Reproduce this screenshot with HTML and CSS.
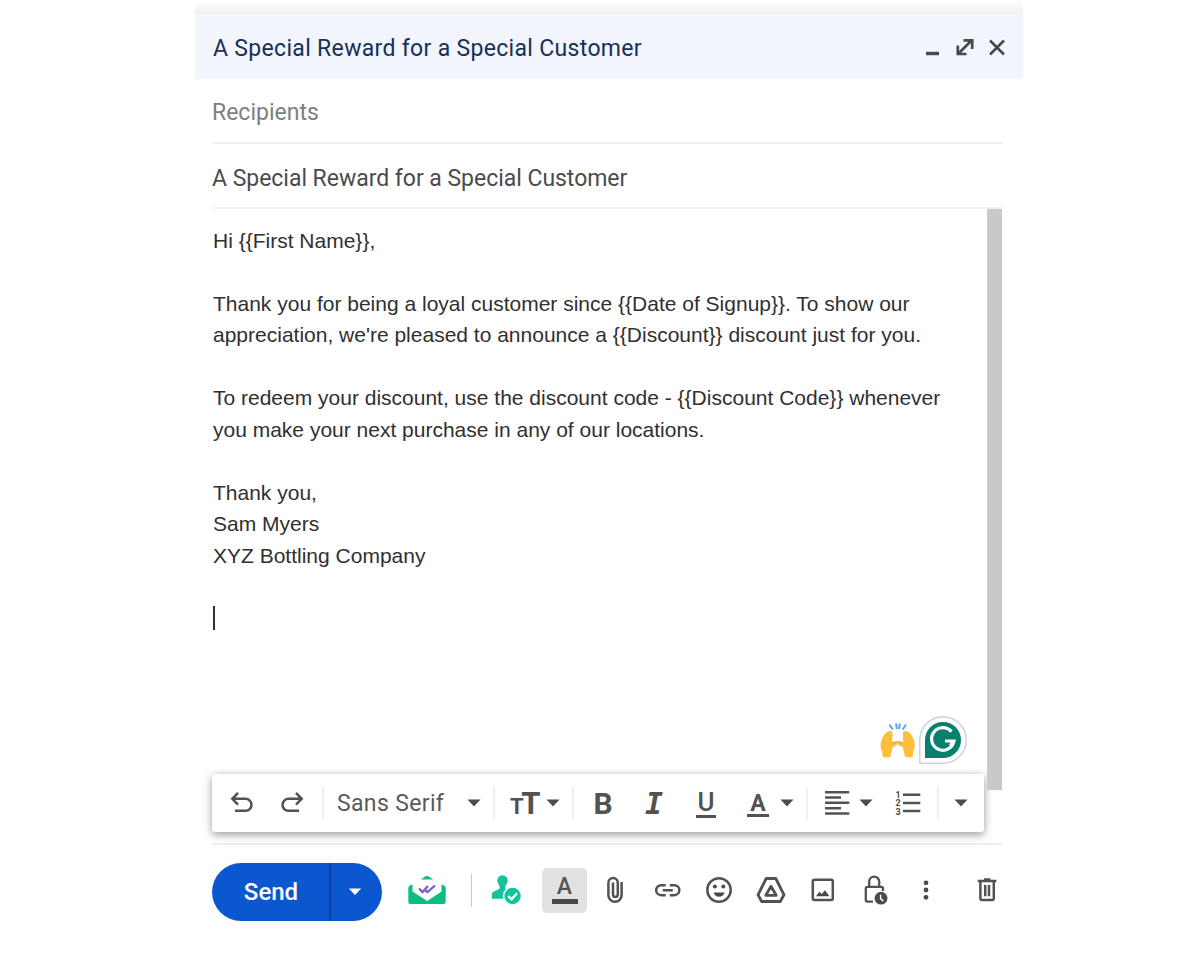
FILE: index.html
```
<!DOCTYPE html>
<html lang="en">
<head>
    <meta charset="UTF-8">
    <meta name="viewport" content="width=device-width, initial-scale=1.0">
    <title>A Special Reward for a Special Customer</title>
    <link rel="stylesheet" href="styles.css">
</head>
<body>

<div class="compose">
    <div class="top-shade"></div>
    <div class="header">
        <h1>A Special Reward for a Special Customer</h1>
        <div class="window-buttons">
            <svg width="20" height="20" viewBox="0 0 20 20"><path d="M4 16.5H17" stroke-width="3.4"/></svg>
            <svg width="20" height="20" viewBox="0 0 20 20"><path d="M4 16L16 4M8.5 3.4H17.2V12M2.8 8.5V17H11.5" stroke-width="2.7"/></svg>
            <svg width="20" height="20" viewBox="0 0 20 20"><path d="M3 3.5L17 17.5M17 3.5L3 17.5" stroke-width="2.6"/></svg>
        </div>
    </div>

    <div class="field recipients">Recipients</div>
    <div class="field subject">A Special Reward for a Special Customer</div>

    <div class="editor">
        <div class="editor-main">
            <div class="message">
                <p>Hi {{First Name}},</p>
                <p>Thank you for being a loyal customer since {{Date of Signup}}. To show our<br>appreciation, we're pleased to announce a {{Discount}} discount just for you.</p>
                <p>To redeem your discount, use the discount code - {{Discount Code}} whenever<br>you make your next purchase in any of our locations.</p>
                <p>Thank you,<br>Sam Myers<br>XYZ Bottling Company</p>
                <div class="cursor"></div>
            </div>

            <div class="badges">
                <svg width="36" height="38" viewBox="0 0 36 38">
                    <path d="M9.5 3.5L12.8 8.5M16 2.5L16.8 8M26 3.5L22.7 8.5M19.8 2.5L19 8" stroke="#4aa8ee" stroke-width="1.9" fill="none"/>
                    <path d="M2.5 35.5L2.2 30.5Q.2 27 .6 23Q1 18 4 14Q7 10 10.5 10Q12.8 10.3 12.5 13L12.2 21.5H17.5Q18.2 23.5 16 24.5L12.5 26.5L10.5 35.5Q6.5 37.5 2.5 35.5Z" fill="#fdbf3c"/>
                    <path d="M32.9 35.5L33.2 30.5Q35.2 27 34.8 23Q34.4 18 31.4 14Q28.4 10 24.9 10Q22.6 10.3 22.9 13L23.2 21.5H17.9Q17.2 23.5 19.4 24.5L22.9 26.5L24.9 35.5Q28.9 37.5 32.9 35.5Z" fill="#fdbf3c"/>
                    <path d="M12.5 22Q17.7 19.6 22.9 22" stroke="#e8982f" stroke-width="1.3" fill="none"/>
                </svg>
                <svg width="48" height="48" viewBox="0 0 48 48">
                    <path d="M.8 47.2V24A23.2 23.2 0 1 1 24 47.2Z" fill="#fff" stroke="#cfd0de" stroke-width="1.4"/>
                    <path d="M6 42V24A18 18 0 1 1 24 42Z" fill="#04806c"/>
                    <path d="M32.5 15.6A11.3 11.3 0 1 0 35 25H26M31 29.5L35.3 25" fill="none" stroke="#fff" stroke-width="3.2"/>
                </svg>
            </div>

            <div class="format-bar">
                <svg class="icon" viewBox="0 0 32 32"><path d="M12 5.8L6.3 11.8L12 17.6M6.5 11.8H19.5A5.9 5.9 0 0 1 19.5 23.8H9"/></svg>
                <svg class="icon" viewBox="0 0 32 32"><path d="M20 5.8L25.7 11.8L20 17.6M25.5 11.8H12.5A5.9 5.9 0 0 0 12.5 23.8H23"/></svg>
                <span class="line"></span>
                <span class="font-name">Sans Serif</span>
                <svg class="caret" viewBox="0 0 14 8"><path d="M.5 .5H13.5L7 7.5Z"/></svg>
                <span class="line"></span>
                <span class="glyph size"><small>T</small>T</span>
                <svg class="caret" viewBox="0 0 14 8"><path d="M.5 .5H13.5L7 7.5Z"/></svg>
                <span class="line"></span>
                <span class="glyph bold">B</span>
                <span class="glyph italic">I</span>
                <span class="glyph underline">U</span>
                <span class="glyph color">A</span>
                <svg class="caret" viewBox="0 0 14 8"><path d="M.5 .5H13.5L7 7.5Z"/></svg>
                <span class="line"></span>
                <svg class="icon" viewBox="0 0 32 32"><path d="M4 5.2H28.3M4 10.5H20M4 15.8H28.3M4 21.2H20M4 26.6H28.3"/></svg>
                <svg class="caret" viewBox="0 0 14 8"><path d="M.5 .5H13.5L7 7.5Z"/></svg>
                <svg class="icon" viewBox="0 0 32 32">
                    <path d="M11 7.7H28.3M11 15.9H28.3M11 24H28.3"/>
                    <text x="3.5" y="10.5">1</text><text x="3.5" y="19">2</text><text x="3.5" y="27.5">3</text>
                </svg>
                <span class="line"></span>
                <svg class="caret" viewBox="0 0 14 8"><path d="M.5 .5H13.5L7 7.5Z"/></svg>
            </div>
        </div>
        <div class="scrollbar"></div>
    </div>

    <div class="actions">
        <div class="send">
            <span class="send-label">Send</span>
            <span class="send-more"><svg width="14" height="8" viewBox="0 0 14 8"><path d="M.8 .5H13.2L7 7Z" fill="#fff"/></svg></span>
        </div>
        <svg class="mail" viewBox="0 0 40 32">
            <path d="M12 7L18 2.6Q20 1.4 22 2.6L28 7Z" fill="#12b886"/>
            <path d="M1.3 14Q1.3 12.6 2.6 11.8L4.5 10.8H35.5L37.4 11.8Q38.7 12.6 38.7 14V28Q38.7 30 36.7 30H3.3Q1.3 30 1.3 28Z" fill="#0abf7c"/>
            <path d="M5.5 8Q5.5 5.5 8 5.5H32Q34.5 5.5 34.5 8V17.5L20.2 27L5.5 17.5Z" fill="#fff"/>
            <path d="M12 14.5L15.5 18L21 12M18.5 16.5L20.5 18L28 11.5" fill="none" stroke="#7560c4" stroke-width="2.3"/>
        </svg>
        <span class="line gray"></span>
        <svg class="icon" viewBox="0 0 32 32">
            <path class="green" d="M12.5 1.3A5.2 5.2 0 0 1 17.7 6.5Q17.7 9.5 15.4 12V14.8L20 17L14 24.7H1.8V20Q2 18.4 4 17.5L9.6 14.8V12Q7.3 9.5 7.3 6.5A5.2 5.2 0 0 1 12.5 1.3Z"/>
            <circle class="green ring" cx="22.6" cy="22" r="9"/>
            <path class="tick" d="M18.2 22L21.5 25.2L27 19.2"/>
        </svg>
        <span class="text-format">A</span>
        <svg class="icon" viewBox="0 0 32 32"><path d="M22.6 8V21.2A6.6 6.6 0 0 1 9.4 21.2V8.8A4.7 4.7 0 0 1 18.8 8.8V20.5A2.4 2.4 0 0 1 14 20.5V8.5"/></svg>
        <svg class="icon" viewBox="0 0 32 32"><path d="M14.7 11.2H10.2A5 5 0 0 0 10.2 21.2H14.7M18.8 11.2H23.3A5 5 0 0 1 23.3 21.2H18.8M11.8 16.2H21.8"/></svg>
        <svg class="icon" viewBox="0 0 32 32">
            <circle cx="16" cy="16" r="11.7"/>
            <path class="solid" d="M10.5 18.6H21.7Q20.2 22.8 16.1 22.8Q12 22.8 10.5 18.6Z"/>
            <circle class="solid" cx="11.9" cy="12.6" r="2"/><circle class="solid" cx="20.3" cy="12.6" r="2"/>
        </svg>
        <svg class="icon" viewBox="0 0 32 32"><path d="M11.2 4.5H20.8L29 20.8L25.3 27.5H6.7L3 20.8ZM16 12.2L21.2 21.3H10.8Z" stroke-width="2.8" stroke-linejoin="round"/></svg>
        <svg class="icon" viewBox="0 0 32 32"><rect x="6.8" y="5.8" width="20" height="20.2" rx="1.5"/><path class="solid" d="M10 22.2L13.3 17.8L15.7 20L19 16.2L23.4 22.2Z"/></svg>
        <svg class="icon" viewBox="0 0 32 32">
            <path d="M24 17V14.5Q24 12.8 22.3 12.8H8.5Q6.8 12.8 6.8 14.5V26Q6.8 27.6 8.5 27.6H14M10.2 12.5V7.6A5 5 0 0 1 20.2 7.6V12.5" stroke-width="2.3"/>
            <circle class="solid" cx="22" cy="24.2" r="6.4"/><path class="hand" d="M21.6 20.8V24.6L24.4 27.2"/>
        </svg>
        <svg class="icon" viewBox="0 0 32 32"><circle class="solid" cx="16" cy="8.8" r="2.4"/><circle class="solid" cx="16" cy="16" r="2.4"/><circle class="solid" cx="16" cy="23.3" r="2.4"/></svg>
        <svg class="icon" viewBox="0 0 32 32"><path d="M6.8 7H25.4M13 5.6H19.5M9.4 7V24.5Q9.4 26 11 26H21.2Q22.8 26 22.8 24.5V7M14.2 11V22.3M18 11V22.3"/></svg>
    </div>
</div>

</body>
</html>
```
FILE: styles.css
```
body {
    margin: 0;
    background-color: #fff;
    font-family: Roboto, sans-serif;
    color: #444;
}

.compose {
    width: 828px;
    margin-left: 195px;
    padding-top: 2px;
}

.top-shade {
    height: 12px;
    background: linear-gradient(#fdfdfd, #f0f0f0);
}

.header {
    display: flex;
    justify-content: space-between;
    align-items: center;
    height: 65px;
    padding: 0 16px 0 18px;
    background-color: #f2f5fc;
    box-sizing: border-box;
}

h1 {
    margin: 0;
    padding-top: 3px;
    color: #173055;
    font-size: 23px;
    font-weight: 400;
    letter-spacing: 0.32px;
}

.window-buttons {
    display: flex;
    gap: 12.5px;
}

.window-buttons svg {
    fill: none;
    stroke: #484a4a;
}

.field {
    width: 791px;
    height: 65px;
    margin-left: 17px;
    border-bottom: 2px solid #f1f1f1;
    box-sizing: border-box;
    font-size: 23px;
    line-height: 67px;
}

.recipients {
    color: #7c7f80;
}

.subject {
    color: #4b4b4b;
    line-height: 69px;
    letter-spacing: -0.03px;
}

.editor {
    display: flex;
    gap: 3px;
    width: 790px;
    height: 636px;
    margin-left: 17px;
    border-bottom: 2px solid #eee;
    box-sizing: border-box;
}

.editor-main {
    display: flex;
    flex-direction: column;
    width: 772px;
    height: 623px;
}

.message {
    flex: 1;
    padding: 15.5px 0 0 1px;
    font-family: "Liberation Sans", Arial, sans-serif;
    font-size: 21px;
    line-height: 31.5px;
    color: #303030;
}

.message p {
    margin: 0 0 31.5px;
    white-space: nowrap;
}

.cursor {
    width: 2px;
    height: 24px;
    margin-top: 35px;
    background-color: #333;
}

.badges {
    display: flex;
    justify-content: flex-end;
    align-items: center;
    gap: 3px;
    margin: 0 17px 10px 0;
}

.scrollbar {
    width: 15px;
    height: 581px;
    background-color: #c9c9c9;
}

.format-bar {
    display: grid;
    grid-template-columns: 50px 46px 15px 130px 26px 15px 38px 26px 15px 51px 52px 52px 38px 26px 15px 38px 33px 45px 17px 30px;
    align-items: center;
    height: 58px;
    padding-left: 14px;
    box-sizing: border-box;
    border-radius: 3px;
    background-color: #fff;
    box-shadow: 0 3px 8px rgba(0, 0, 0, 0.35), 0 0 8px rgba(0, 0, 0, 0.08);
}

.icon {
    width: 32px;
    height: 32px;
    fill: none;
    stroke: #525252;
    stroke-width: 2.5;
}

.icon text {
    font-size: 9px;
    font-weight: 700;
    fill: #4d4d4d;
    stroke: none;
}

.icon .solid {
    fill: #4a4a4a;
    stroke: none;
}

.icon .green {
    fill: #15c39a;
    stroke: none;
}

.icon .ring {
    stroke: #fff;
    stroke-width: 1.6;
}

.icon .tick {
    stroke: #fff;
    stroke-width: 2.4;
}

.icon .hand {
    stroke: #fff;
    stroke-width: 1.4;
}

.caret {
    width: 14px;
    height: 8px;
    fill: #4d4d4d;
}

.line {
    width: 2px;
    height: 33px;
    background-color: #edf1f5;
}

.font-name {
    padding-top: 1px;
    font-size: 23px;
    letter-spacing: 0.35px;
    color: #5a5a5a;
}

.glyph {
    width: 32px;
    height: 32px;
    box-sizing: border-box;
    text-align: center;
    font-weight: 700;
    line-height: 33px;
    color: #525252;
}

.size {
    font-size: 31px;
    letter-spacing: -2.5px;
    white-space: nowrap;
}

.size small {
    font-size: 22px;
}

.bold {
    font-size: 30px;
}

.italic {
    font-family: "DejaVu Sans Mono", monospace;
    font-style: italic;
    font-size: 30px;
}

.underline {
    width: 20px;
    height: 28px;
    margin: 2px 0 0 6px;
    border-bottom: 3px solid #525252;
    font-size: 26px;
    font-weight: 500;
    line-height: 25px;
}

.color {
    width: 22px;
    height: 26px;
    margin: 1px 0 0 5px;
    border-bottom: 3px solid #525252;
    font-size: 23px;
    line-height: 25px;
}

.actions {
    display: grid;
    grid-template-columns: 195px 64px 19px 52px 57px 52px 52px 52px 51px 53px 51px 61px 32px;
    align-items: center;
    height: 58px;
    margin: 18px 0 0 17px;
}

.actions .icon,
.mail {
    margin-bottom: 4px;
}

.mail {
    width: 40px;
    height: 32px;
}

.gray {
    width: 1px;
    margin-bottom: 4px;
    background-color: #c8c8c8;
}

.send {
    display: flex;
    width: 170px;
    height: 58px;
    border-radius: 29px;
    background-color: #0b57d0;
    color: #fff;
}

.send-label {
    width: 116px;
    padding-left: 1px;
    border-right: 2px solid #0b3f9c;
    box-sizing: content-box;
    text-align: center;
    font-size: 24px;
    font-weight: 500;
    line-height: 58px;
}

.send-more {
    display: flex;
    flex: 1;
    align-items: center;
    padding-left: 17px;
}

.text-format {
    width: 45px;
    height: 45px;
    margin-bottom: 4px;
    border-radius: 5px;
    background: linear-gradient(#4a4a4a, #4a4a4a) center 31px / 26px 5px no-repeat #e2e2e2;
    color: #555;
    text-align: center;
    font-size: 23px;
    font-weight: 500;
    line-height: 38px;
}
```
